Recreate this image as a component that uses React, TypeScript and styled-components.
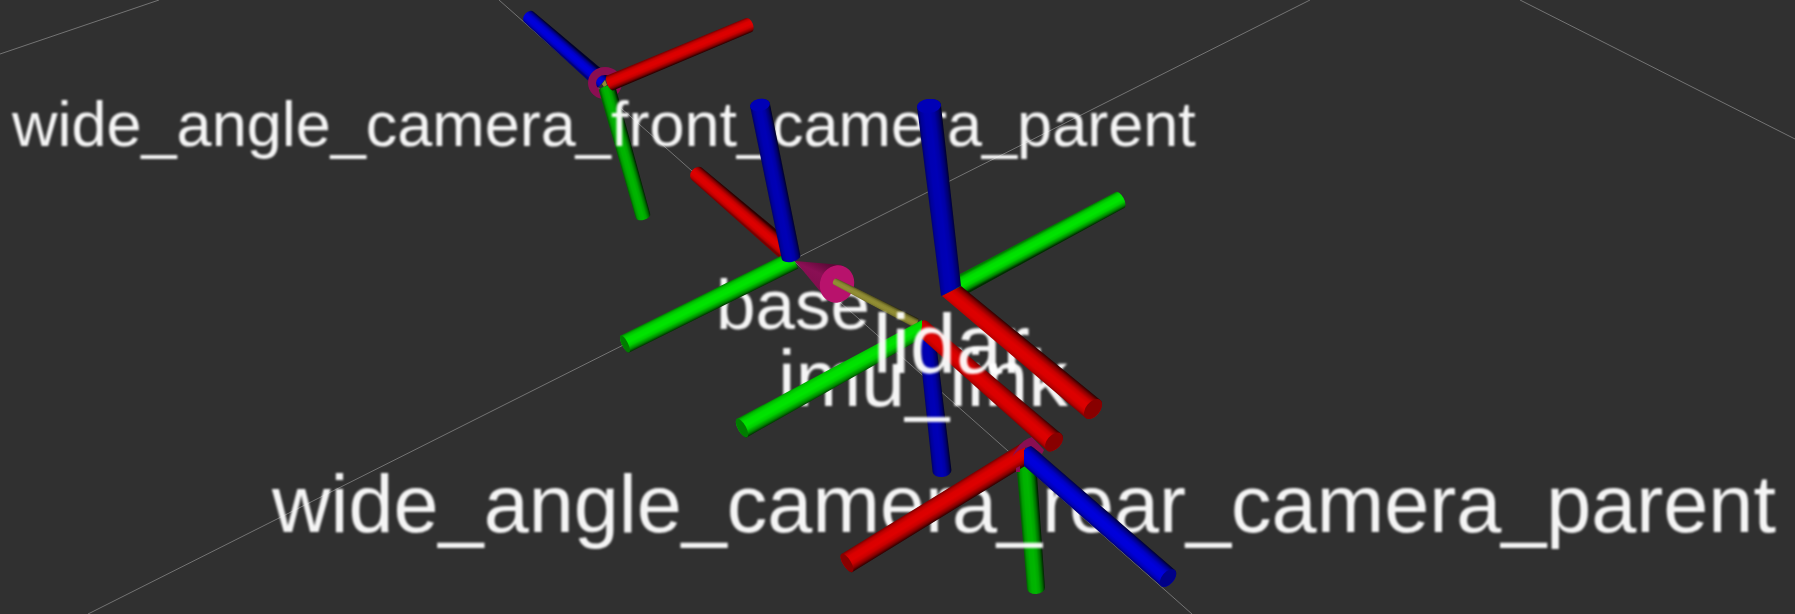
import React from "react";
import styled, { createGlobalStyle } from "styled-components";

const GlobalStyle = createGlobalStyle`
  body {
    margin: 0;
    background: #303030;
  }
`;

const Viewport = styled.main`
  width: 100%;
  overflow: hidden;
  background: #303030;
`;

const Scene = styled.svg`
  display: block;
  width: 100%;
  height: auto;
`;

const GridLine = styled.line`
  stroke: #747474;
  stroke-width: 1px;
`;

const FrameLabel = styled.text<{ $size: number }>`
  font-family: "Liberation Sans", Arial, sans-serif;
  font-size: ${(p) => p.$size}px;
  fill: #ffffff;
  fill-opacity: 0.95;
  filter: url(#label-texture);
`;

type Point = [number, number];

const shades = {
  red: { lit: [222, 0, 0], face: "#880000" },
  green: { lit: [0, 228, 0], face: "#007c00" },
  shadedGreen: { lit: [0, 182, 0], face: "#00b600" },
  blue: { lit: [0, 0, 220], face: "#000088" },
  shadedBlue: { lit: [0, 0, 182], face: "#0000b6" },
  olive: { lit: [146, 142, 52], face: "#928e34" },
};

const falloff: [number, number][] = [
  [0, 0.55],
  [0.12, 0.84],
  [0.28, 0.98],
  [0.5, 1],
  [0.68, 0.9],
  [0.86, 0.6],
  [1, 0.2],
];

interface RodProps {
  id: string;
  shade: keyof typeof shades;
  from: Point;
  to: Point;
  startWidth: number;
  endWidth: number;
  /** Half depth of the far end's ellipse. */
  depth?: number;
  startDepth?: number;
  /** Outline of the near end where it is cut by another rod. */
  cut?: Point[];
  /** Whether the flat end is turned to the camera. */
  faced?: boolean;
}

/** One cylinder, lit across its width. */
function Rod({ id, shade, from, to, startWidth, endWidth, depth = 4, startDepth = 0, cut, faced }: RodProps) {
  const dx = to[0] - from[0];
  const dy = to[1] - from[1];
  const length = Math.hypot(dx, dy);
  // The light comes from the left, so the normal always points right.
  const side = dy > 0 ? 1 : -1;
  const nx = (side * dy) / length;
  const ny = (-side * dx) / length;
  const a = startWidth / 2;
  const b = endWidth / 2;
  const angle = (Math.atan2(dy, dx) * 180) / Math.PI;
  const sweep = dy > 0 ? 0 : 1;
  const { lit, face } = shades[shade];
  const x1 = to[0] - nx * b;
  const y1 = to[1] - ny * b;
  const x2 = to[0] + nx * b;
  const y2 = to[1] + ny * b;
  const nearEnd = cut
    ? cut.map(([x, y]) => `L${x},${y}`).join(" ")
    : `L${from[0] + nx * a},${from[1] + ny * a} ` +
      `A${startDepth},${a} ${angle} 0 ${sweep} ${from[0] - nx * a},${from[1] - ny * a}`;
  return (
    <g>
      <defs>
        <linearGradient id={id} gradientUnits="userSpaceOnUse" x1={x1} y1={y1} x2={x2} y2={y2}>
          {falloff.map(([offset, light]) => (
            <stop
              key={offset}
              offset={offset}
              stopColor={`rgb(${lit.map((c) => Math.round(c * light)).join(",")})`}
            />
          ))}
        </linearGradient>
      </defs>
      <path
        d={`M${x1},${y1} A${depth},${b} ${angle} 0 ${sweep} ${x2},${y2} ${nearEnd} Z`}
        fill={`url(#${id})`}
      />
      {faced && (
        <ellipse rx={depth} ry={b} fill={face} transform={`translate(${to[0]} ${to[1]}) rotate(${angle})`} />
      )}
    </g>
  );
}

export default function App() {
  return (
    <>
      <GlobalStyle />
      <Viewport>
        <Scene viewBox="0 0 1795 614" role="img" aria-label="Robot coordinate frames">
          <defs>
            {/* Labels are magnified glyph textures, so their edges are soft */}
            <filter id="label-texture" x="-2%" y="-10%" width="104%" height="120%">
              <feGaussianBlur stdDeviation="0.9" />
            </filter>
            <linearGradient id="cone" gradientUnits="userSpaceOnUse" x1={833} y1={266} x2={818} y2={298}>
              <stop offset={0} stopColor="#5c0936" />
              <stop offset={0.35} stopColor="#8a0f54" />
              <stop offset={0.75} stopColor="#820e4e" />
              <stop offset={1} stopColor="#5c0936" />
            </linearGradient>
          </defs>

          <GridLine x1={0} y1={54} x2={159} y2={0} />
          <GridLine x1={499} y1={0} x2={1192} y2={614} />
          <GridLine x1={88} y1={614} x2={1310} y2={0} />
          <GridLine x1={1520} y1={0} x2={1795} y2={139} />

          {/* Front camera frame */}
          <Rod id="front-z" shade="blue" from={[603, 82]} to={[529, 17]} startWidth={18} endWidth={14} depth={5} />
          <ellipse cx={605} cy={83} rx={13} ry={12} fill="none" stroke="#8a0e52" strokeWidth={8} />
          <path d="M602 84 l3 -4 l2 5 l-3 2z" fill="#928e34" />
          <Rod id="front-y" shade="shadedGreen" from={[607, 88]} to={[643, 216]} startWidth={17} endWidth={15} depth={4} startDepth={2} />
          <Rod id="front-x" shade="red" from={[610, 83]} to={[749, 25]} startWidth={16} endWidth={15} depth={4} startDepth={3} />
          <FrameLabel $size={63} x={12} y={146}>wide_angle_camera_front_camera_parent</FrameLabel>

          {/* Base frame */}
          <FrameLabel $size={71} x={716} y={329}>base</FrameLabel>
          <Rod id="base-x" shade="red" from={[789, 253]} to={[697, 174]} startWidth={20} endWidth={16} depth={6} />
          <Rod id="base-y" shade="green" from={[794, 260]} to={[625, 344]} startWidth={19} endWidth={19} depth={3} faced />
          <Rod id="base-z" shade="shadedBlue" from={[791, 257]} to={[760, 105]} startWidth={19} endWidth={20} depth={6} startDepth={5} faced />

          {/* Arrow from the sensor to its parent */}
          <path d="M795 261 L842 265 L824 296 Z" fill="url(#cone)" />
          <ellipse cx={837} cy={284} rx={17} ry={19} fill="#b8126c" transform="rotate(20 837 284)" />
          <Rod id="shaft" shade="olive" from={[836, 282]} to={[916, 323]} startWidth={7} endWidth={10} depth={1} startDepth={3} />

          {/* IMU frame */}
          <Rod id="imu-z" shade="shadedBlue" from={[927, 338]} to={[942, 471]} startWidth={17} endWidth={19} depth={6} />
          <FrameLabel $size={79} x={778} y={406}>imu_link</FrameLabel>

          {/* Rear camera frame */}
          <Rod id="rear-y" shade="shadedGreen" from={[1026, 460]} to={[1036, 588]} startWidth={20} endWidth={18} depth={6} />
          <FrameLabel $size={81} x={272} y={532}>wide_angle_camera_rear_camera_parent</FrameLabel>
          <Rod
            id="rear-x"
            shade="red"
            from={[1026, 453]}
            to={[847, 563]}
            startWidth={21}
            endWidth={21}
            depth={4}
            cut={[[1025, 466], [1025, 441]]}
            faced
          />
          <path d="M1012 457 Q1020 440 1032 437 L1044 450 L1042 454 Q1032 446 1024 448 Q1017 450 1012 457 Z M1016 468 L1020 466 L1020 472 L1016 472 Z" fill="#8a0e52" />
          <Rod
            id="rear-z"
            shade="blue"
            from={[1031, 458]}
            to={[1168, 578]}
            startWidth={19}
            endWidth={21}
            depth={6}
            cut={[[1034, 448], [1031, 446], [1028, 447], [1024, 450], [1024, 466]]}
            faced
          />

          <Rod
            id="imu-x"
            shade="red"
            from={[925, 329]}
            to={[1054, 442]}
            startWidth={17}
            endWidth={22}
            depth={7}
            cut={[[927, 321], [924, 320], [921, 322], [921, 338]]}
            faced
          />
          <Rod
            id="imu-y"
            shade="green"
            from={[922, 328]}
            to={[742, 428]}
            startWidth={16}
            endWidth={21}
            depth={4}
            cut={[[919, 340], [922, 326], [922, 320]]}
            faced
          />

          {/* Lidar frame */}
          <FrameLabel $size={83} x={873} y={373}>lidar</FrameLabel>
          <Rod id="lidar-y" shade="green" from={[956, 288]} to={[1120, 200]} startWidth={21} endWidth={18} depth={4} />
          <Rod
            id="lidar-x"
            shade="red"
            from={[949, 291]}
            to={[1093, 409]}
            startWidth={18}
            endWidth={23}
            depth={7}
            cut={[[961, 286], [942, 296]]}
            faced
          />
          <Rod
            id="lidar-z"
            shade="shadedBlue"
            from={[951, 291]}
            to={[929, 106]}
            startWidth={20}
            endWidth={24}
            depth={7}
            cut={[[961, 286], [941, 296]]}
            faced
          />
        </Scene>
      </Viewport>
    </>
  );
}
